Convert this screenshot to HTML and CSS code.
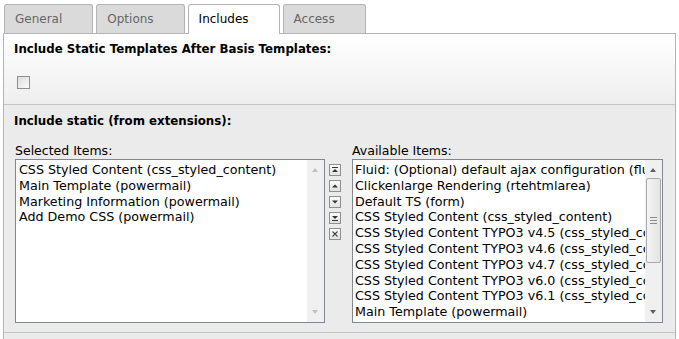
FILE: index.html
```html
<!DOCTYPE html>
<html lang="en">
<head>
    <meta charset="UTF-8">
    <title>Template - Includes</title>
    <link rel="stylesheet" href="styles.css">
</head>
<body>

    <ul class="tabs">
        <li class="tab">General</li>
        <li class="tab">Options</li>
        <li class="tab active">Includes</li>
        <li class="tab">Access</li>
    </ul>

    <div class="panel">
        <!-- Static templates after basis -->
        <div class="section section-top">
            <h3>Include Static Templates After Basis Templates:</h3>
            <span class="checkbox"></span>
        </div>

        <!-- Static templates from extensions -->
        <div class="section section-grey">
            <h3>Include static (from extensions):</h3>
            <div class="selector">
                <div class="list-col">
                    <label>Selected Items:</label>
                    <div class="listbox">
                        <ul class="items">
                            <li>CSS Styled Content (css_styled_content)</li>
                            <li>Main Template (powermail)</li>
                            <li>Marketing Information (powermail)</li>
                            <li>Add Demo CSS (powermail)</li>
                        </ul>
                        <div class="scrollbar disabled">
                            <span class="arrow up"></span>
                            <span class="arrow down"></span>
                        </div>
                    </div>
                </div>

                <div class="buttons">
                    <span class="btn">
                        <svg width="10" height="10" viewBox="0 0 10 10"><rect x="2" y="2" width="6" height="1" fill="#333"/><path d="M2 7h6L5 4z" fill="#333"/></svg>
                    </span>
                    <span class="btn">
                        <svg width="10" height="10" viewBox="0 0 10 10"><path d="M2 6.5h6L5 3.5z" fill="#333"/></svg>
                    </span>
                    <span class="btn">
                        <svg width="10" height="10" viewBox="0 0 10 10"><path d="M2 3.5h6L5 6.5z" fill="#333"/></svg>
                    </span>
                    <span class="btn">
                        <svg width="10" height="10" viewBox="0 0 10 10"><path d="M2 3h6L5 6z" fill="#333"/><rect x="2" y="7" width="6" height="1" fill="#333"/></svg>
                    </span>
                    <span class="btn">
                        <svg width="10" height="10" viewBox="0 0 10 10"><path d="M2.5 2.5l5 5M7.5 2.5l-5 5" stroke="#444" stroke-width="1.1"/></svg>
                    </span>
                </div>

                <div class="list-col avail">
                    <label>Available Items:</label>
                    <div class="listbox">
                        <ul class="items">
                            <li>Fluid: (Optional) default ajax configuration (fluid)</li>
                            <li>Clickenlarge Rendering (rtehtmlarea)</li>
                            <li>Default TS (form)</li>
                            <li>CSS Styled Content (css_styled_content)</li>
                            <li>CSS Styled Content TYPO3 v4.5 (css_styled_content)</li>
                            <li>CSS Styled Content TYPO3 v4.6 (css_styled_content)</li>
                            <li>CSS Styled Content TYPO3 v4.7 (css_styled_content)</li>
                            <li>CSS Styled Content TYPO3 v6.0 (css_styled_content)</li>
                            <li>CSS Styled Content TYPO3 v6.1 (css_styled_content)</li>
                            <li>Main Template (powermail)</li>
                        </ul>
                        <div class="scrollbar">
                            <span class="arrow up"></span>
                            <span class="thumb"><span class="grip"></span></span>
                            <span class="arrow down"></span>
                        </div>
                    </div>
                </div>
            </div>
        </div>

        <div class="section section-rest"></div>
    </div>
</body>
</html>
```

FILE: styles.css
```css
body {
    margin: 0 0 0 3px;
    font-family: "DejaVu Sans", Verdana, sans-serif;
    font-size: 12px;
    color: #000;
    background-color: #fff;
}
.tabs {
    list-style: none;
    margin: 4px 0 0 0;
    padding: 0 0 0 1px;
    display: flex;
    height: 29px;
}
.tab {
    box-sizing: border-box;
    height: 29px;
    padding: 0 30px 0 10px;
    margin-right: 3px;
    line-height: 28px;
    font-size: 12px;
    color: #666;
    background-color: #dadada;
    border: 1px solid #b4b4b4;
    border-bottom: none;
    border-radius: 3px 3px 0 0;
}
.tab.active {
    background-color: #fff;
    color: #000;
    height: 30px;
    position: relative;
    z-index: 1;
}
.panel {
    width: 671px;
    border: 1px solid #b4b4b4;
    border-bottom: none;
}
.section h3 {
    margin: 0;
    font-size: 11.8px;
    font-weight: bold;
    line-height: 16px;
}
.section-top {
    height: 71px;
    padding: 7px 10px 0 10px;
    box-sizing: border-box;
    background: linear-gradient(#fff, #eeeeee);
    border-bottom: 1px solid #c4c4c4;
}
.checkbox {
    display: block;
    width: 11px;
    height: 11px;
    margin: 19px 0 0 3px;
    border: 1px solid #8e8f8f;
    background: linear-gradient(135deg, #dcdcdc, #fbfbfb);
}
.section-grey {
    background-color: #ebebeb;
    height: 228px;
    padding: 8px 10px 0 10px;
    box-sizing: border-box;
    border-bottom: 1px solid #c4c4c4;
}
.section-rest {
    background-color: #ebebeb;
    height: 10px;
}
.selector {
    display: flex;
    margin-top: 15px;
}
.list-col {
    margin-left: 1px;
}
.list-col label {
    display: block;
    font-size: 12.5px;
    line-height: 14px;
    margin-bottom: 1px;
}
.listbox {
    width: 308px;
    height: 162px;
    border: 1px solid #828790;
    background-color: #fff;
    display: flex;
    overflow: hidden;
}
.avail .listbox {
    width: 309px;
}
.items {
    list-style: none;
    margin: 0;
    padding: 2px 0 0 3px;
    flex: 1;
    min-width: 0;
    overflow: hidden;
    white-space: nowrap;
    font-size: 12.7px;
    line-height: 15.8px;
}
.avail .items {
    padding-left: 2px;
}
.scrollbar {
    width: 17px;
    flex: none;
    position: relative;
    background-color: #f0f0f0;
}
.arrow {
    position: absolute;
    left: 5px;
    width: 0;
    height: 0;
    border-left: 3.5px solid transparent;
    border-right: 3.5px solid transparent;
}
.arrow.up {
    top: 8px;
    border-bottom: 4px solid #606060;
}
.arrow.down {
    bottom: 8px;
    border-top: 4px solid #606060;
}
.scrollbar.disabled .arrow.up { border-bottom-color: #bfbfbf; }
.scrollbar.disabled .arrow.down { border-top-color: #bfbfbf; }
.thumb {
    position: absolute;
    left: 1px;
    top: 18px;
    width: 13px;
    height: 83px;
    border: 1px solid #a9a9a9;
    border-radius: 2px;
    background: linear-gradient(90deg, #f4f4f4, #e4e4e4);
}
.grip {
    position: absolute;
    left: 3px;
    top: 38px;
    width: 7px;
    height: 5px;
    border-top: 1px solid #8c8c8c;
    border-bottom: 1px solid #8c8c8c;
}
.grip::after {
    content: "";
    position: absolute;
    left: 0;
    top: 2px;
    width: 7px;
    height: 1px;
    background-color: #8c8c8c;
}
.buttons {
    display: flex;
    flex-direction: column;
    gap: 4px;
    margin: 20px 10px 0 4px;
}
.btn {
    box-sizing: border-box;
    width: 12px;
    height: 12px;
    border: 1px solid #8f8f8f;
    background: linear-gradient(#fafafa, #e2e2e2);
    display: flex;
    align-items: center;
    justify-content: center;
}
.btn svg {
    display: block;
}
```
